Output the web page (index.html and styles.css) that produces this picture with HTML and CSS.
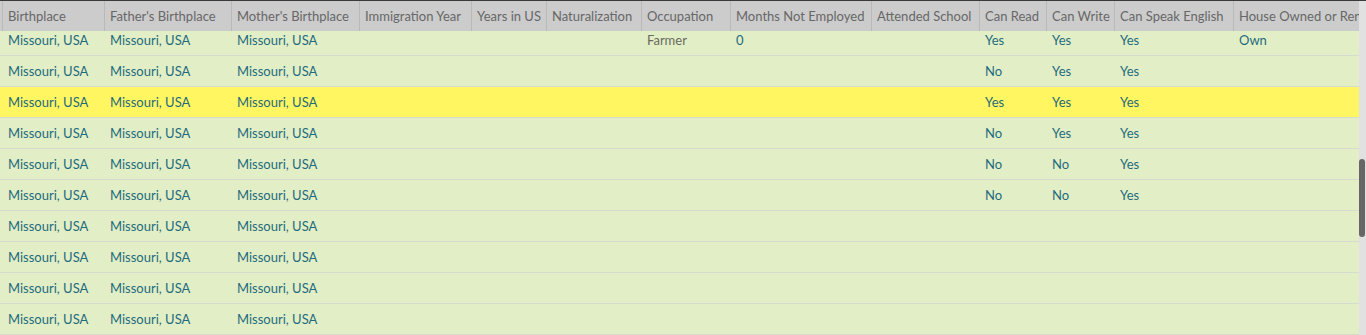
FILE: index.html
```html
<!DOCTYPE html>
<html>
<head>
<meta charset="utf-8">
<link rel="stylesheet" href="styles.css">
</head>
<body>
<div class="frame">
  <div class="table">
    <div class="row head">
      <div class="cell">Birthplace</div>
      <div class="cell">Father's Birthplace</div>
      <div class="cell">Mother's Birthplace</div>
      <div class="cell">Immigration Year</div>
      <div class="cell">Years in US</div>
      <div class="cell">Naturalization</div>
      <div class="cell">Occupation</div>
      <div class="cell">Months Not Employed</div>
      <div class="cell">Attended School</div>
      <div class="cell">Can Read</div>
      <div class="cell">Can Write</div>
      <div class="cell">Can Speak English</div>
      <div class="cell">House Owned or Rented</div>
    </div>
    <div class="body">
      <div class="row data first">
        <div class="cell">Missouri, USA</div><div class="cell">Missouri, USA</div><div class="cell">Missouri, USA</div>
        <div class="cell"></div><div class="cell"></div><div class="cell"></div>
        <div class="cell muted">Farmer</div><div class="cell">0</div><div class="cell"></div>
        <div class="cell">Yes</div><div class="cell">Yes</div><div class="cell">Yes</div><div class="cell">Own</div>
      </div>
      <div class="row data">
        <div class="cell">Missouri, USA</div><div class="cell">Missouri, USA</div><div class="cell">Missouri, USA</div>
        <div class="cell"></div><div class="cell"></div><div class="cell"></div>
        <div class="cell"></div><div class="cell"></div><div class="cell"></div>
        <div class="cell">No</div><div class="cell">Yes</div><div class="cell">Yes</div><div class="cell"></div>
      </div>
      <div class="row data selected">
        <div class="cell">Missouri, USA</div><div class="cell">Missouri, USA</div><div class="cell">Missouri, USA</div>
        <div class="cell"></div><div class="cell"></div><div class="cell"></div>
        <div class="cell"></div><div class="cell"></div><div class="cell"></div>
        <div class="cell">Yes</div><div class="cell">Yes</div><div class="cell">Yes</div><div class="cell"></div>
      </div>
      <div class="row data">
        <div class="cell">Missouri, USA</div><div class="cell">Missouri, USA</div><div class="cell">Missouri, USA</div>
        <div class="cell"></div><div class="cell"></div><div class="cell"></div>
        <div class="cell"></div><div class="cell"></div><div class="cell"></div>
        <div class="cell">No</div><div class="cell">Yes</div><div class="cell">Yes</div><div class="cell"></div>
      </div>
      <div class="row data">
        <div class="cell">Missouri, USA</div><div class="cell">Missouri, USA</div><div class="cell">Missouri, USA</div>
        <div class="cell"></div><div class="cell"></div><div class="cell"></div>
        <div class="cell"></div><div class="cell"></div><div class="cell"></div>
        <div class="cell">No</div><div class="cell">No</div><div class="cell">Yes</div><div class="cell"></div>
      </div>
      <div class="row data">
        <div class="cell">Missouri, USA</div><div class="cell">Missouri, USA</div><div class="cell">Missouri, USA</div>
        <div class="cell"></div><div class="cell"></div><div class="cell"></div>
        <div class="cell"></div><div class="cell"></div><div class="cell"></div>
        <div class="cell">No</div><div class="cell">No</div><div class="cell">Yes</div><div class="cell"></div>
      </div>
      <div class="row data">
        <div class="cell">Missouri, USA</div><div class="cell">Missouri, USA</div><div class="cell">Missouri, USA</div>
      </div>
      <div class="row data">
        <div class="cell">Missouri, USA</div><div class="cell">Missouri, USA</div><div class="cell">Missouri, USA</div>
      </div>
      <div class="row data">
        <div class="cell">Missouri, USA</div><div class="cell">Missouri, USA</div><div class="cell">Missouri, USA</div>
      </div>
      <div class="row data">
        <div class="cell">Missouri, USA</div><div class="cell">Missouri, USA</div><div class="cell">Missouri, USA</div>
      </div>
    </div>
  </div>
  <div class="scrollbar"><div class="thumb"></div></div>
</div>
</body>
</html>
```
FILE: styles.css
```css
html, body {
  margin: 0;
  padding: 0;
  background: #e2efc6;
}
body {
  font-family: "Lato", "Roboto", sans-serif;
  font-size: 13px;
  overflow: hidden;
}
.frame {
  display: flex;
  height: 335px;
  border-top: 1px solid #3a3a3a;
  box-sizing: border-box;
  overflow: hidden;
}
.table {
  flex: 0 0 1359px;
  width: 1359px;
  overflow: hidden;
  display: flex;
  flex-direction: column;
}
.row {
  display: grid;
  grid-template-columns: 102px 127px 128px 112px 75px 95px 89px 141px 108px 67px 68px 119px 160px;
  padding-left: 2px;
  white-space: nowrap;
}
.cell {
  overflow: hidden;
  padding-left: 5px;
  border-left: 1px solid transparent;
}
.head {
  flex: 0 0 30px;
  height: 30px;
  background: #cccccc;
  color: #676767;
  line-height: 30px;
  position: relative;
  z-index: 1;
}
.head .cell {
  border-left-color: #b9b9b9;
}
.body {
  flex: 1;
  overflow: hidden;
}
.data {
  height: 30px;
  line-height: 30px;
  border-bottom: 1px solid #d7dbcf;
  color: #1f6b7e;
  background: #e2efc6;
}
.data.first {
  margin-top: -6px;
}
.data.selected {
  background: #fff662;
}
.muted {
  color: #6a6a60;
}
.scrollbar {
  flex: 0 0 7px;
  background: #e1e1e1;
  padding-top: 158px;
  box-sizing: border-box;
}
.thumb {
  width: 6px;
  height: 78px;
  background: #666666;
  border-radius: 3px;
}
```
